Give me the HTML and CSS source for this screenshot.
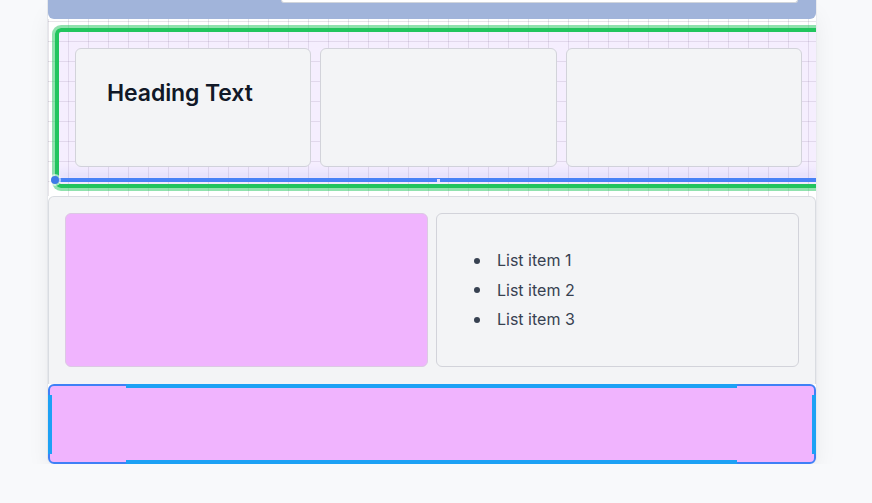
FILE: index.html
```html
<!DOCTYPE html>
<html>
<head>
<meta charset="utf-8">
<link rel="stylesheet" href="styles.css">
</head>
<body>
<div class="frame">
  <div class="topbar"><div class="topbar-input"></div></div>
  <section class="canvas">
    <div class="selected">
      <div class="cards">
        <div class="card"><h2 class="heading">Heading Text</h2></div>
        <div class="card"></div>
        <div class="card"></div>
      </div>
      <div class="drop-line"><span class="drop-dot"></span><span class="drop-handle"></span></div>
    </div>
  </section>
  <section class="split">
    <div class="pink-box"></div>
    <div class="list-card">
      <ul class="list">
        <li>List item 1</li>
        <li>List item 2</li>
        <li>List item 3</li>
      </ul>
    </div>
  </section>
  <section class="banner"></section>
</div>
</body>
</html>
```
FILE: styles.css
```css
html, body {
  margin: 0;
  padding: 0;
  background: #f8f9fb;
  font-family: Inter, "Noto Sans", sans-serif;
  overflow: hidden;
}

.frame {
  margin-left: 47px;
  width: 770px;
  box-sizing: border-box;
  border-left: 1px solid #e5e7eb;
  border-right: 1px solid #e9eaee;
  border-radius: 0 0 6px 6px;
  box-shadow: 0 12px 24px -6px rgba(0, 0, 0, 0.1);
  background: #ffffff;
}

.topbar {
  height: 19px;
  background: #a1b4da;
  border-radius: 0 0 6px 6px;
  display: flex;
  align-items: flex-start;
}

.topbar-input {
  margin-left: auto;
  margin-right: 18px;
  width: 515px;
  height: 2px;
  box-sizing: content-box;
  background: #ffffff;
  border: 1px solid #d1d5db;
  border-top: none;
  border-radius: 0 0 5px 5px;
}

.canvas {
  height: 177px;
  box-sizing: border-box;
  padding: 9px 0 8px 7px;
  overflow: hidden;
  background-color: #ffffff;
  background-image:
    linear-gradient(to right, rgba(60, 40, 80, 0.12) 1px, transparent 1px),
    linear-gradient(to bottom, rgba(60, 40, 80, 0.12) 1px, transparent 1px);
  background-size: 20px 20px;
  background-position: 0 2px;
}

.selected {
  position: relative;
  width: 767px;
  height: 160px;
  box-sizing: border-box;
  border: 4px solid #22c55e;
  border-radius: 6px;
  box-shadow: 0 0 0 3px rgba(34, 197, 94, 0.5);
  background: rgba(200, 160, 250, 0.18);
  padding: 16px 16px 0 16px;
}

.cards {
  display: grid;
  grid-template-columns: repeat(3, 1fr);
  gap: 9px;
}

.card {
  height: 119px;
  box-sizing: border-box;
  background: #f3f4f6;
  border: 1px solid #d2d3da;
  border-radius: 6px;
  padding: 29px 31px;
}

.heading {
  margin: 0;
  font-size: 23px;
  line-height: 30px;
  font-weight: 600;
  color: #111827;
  letter-spacing: -0.1px;
}

.drop-line {
  position: absolute;
  left: -4px;
  right: 0;
  bottom: 2px;
  height: 4px;
  background: #4881f6;
  box-shadow: 0 -4px 10px rgba(120, 120, 245, 0.28);
}

.drop-dot {
  position: absolute;
  left: -4px;
  top: -2px;
  width: 8px;
  height: 8px;
  border-radius: 50%;
  background: #3f7be8;
  box-shadow: 0 0 0 2px rgba(255, 255, 255, 0.6);
}

.drop-handle {
  position: absolute;
  left: 382px;
  top: 1px;
  width: 3px;
  height: 3px;
  background: #e4dcfb;
}

.split {
  box-sizing: border-box;
  height: 188px;
  background: #f3f4f6;
  border: 1px solid #d9dce1;
  border-bottom: none;
  border-radius: 6px 6px 0 0;
  padding: 16px;
  display: grid;
  grid-template-columns: 1fr 1fr;
  gap: 8px;
  align-items: start;
}

.pink-box {
  height: 154px;
  box-sizing: border-box;
  background: #f0b4fe;
  border: 1px solid #dcc8e4;
  border-radius: 6px;
}

.list-card {
  height: 154px;
  box-sizing: border-box;
  background: #f3f4f6;
  border: 1px solid #d2d3da;
  border-radius: 6px;
  padding: 32px 32px;
}

.list {
  margin: 0;
  padding-left: 5px;
  list-style: none;
  font-size: 16px;
  line-height: 29.5px;
  color: #374151;
}

.list li {
  display: flex;
  align-items: center;
  gap: 17px;
}

.list li::before {
  content: "";
  width: 6px;
  height: 6px;
  border-radius: 50%;
  background: #374151;
  flex: none;
}

.banner {
  position: relative;
  height: 80px;
  box-sizing: border-box;
  background: #f0b4fe;
  border: 2px solid #3f80f6;
  border-radius: 6px;
}

.banner::before {
  content: "";
  position: absolute;
  top: -2px;
  bottom: -2px;
  left: 76px;
  right: 77px;
  border-top: 4px solid #1da1f5;
  border-bottom: 4px solid #1da1f5;
}

.banner::after {
  content: "";
  position: absolute;
  top: 9px;
  bottom: 8px;
  left: -2px;
  right: -2px;
  border-left: 4px solid #1da1f5;
  border-right: 4px solid #1da1f5;
}
```
